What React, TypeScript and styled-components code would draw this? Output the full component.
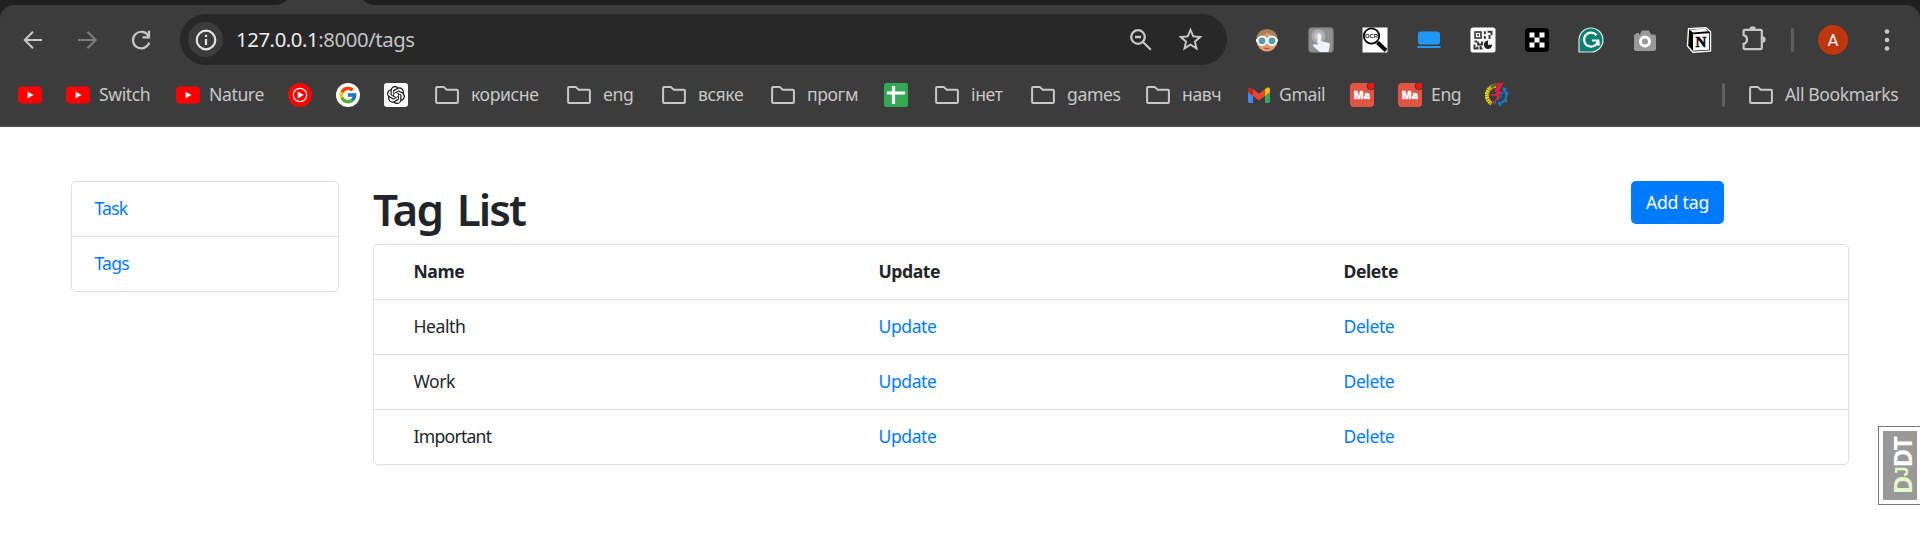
import React from "react";
import styled, { createGlobalStyle } from "styled-components";
import { FcGoogle } from "react-icons/fc";
import { SiOpenai } from "react-icons/si";
import { MdStarBorder } from "react-icons/md";

const Global = createGlobalStyle`
  * { box-sizing: border-box; }
  html, body { margin: 0; background: #fff; overflow: hidden; }
  body { font-family: "Noto Sans", "Open Sans", sans-serif; }
`;

const Page = styled.div`
  width: 1920px;
  height: 549px;
  position: relative;
  overflow: hidden;
`;
const TabStrip = styled.div`
  height: 5px;
  padding-left: 276px;
  svg { display: block; }
`;
const Chrome = styled.div`
  height: 127px;
  background: #1f2120;
`;
const Panel = styled.div`
  height: 122px;
  background: #3c3c3c;
  border-radius: 14px 14px 0 0;
  border-bottom: 2px solid #4b494b;
`;
const Toolbar = styled.div`
  height: 70px;
  display: flex;
  align-items: center;
  padding: 0 30px 1px 21px;
`;
const NavButton = styled.span<{ $gap: number }>`
  width: 24px;
  height: 24px;
  margin-right: ${(p) => p.$gap}px;
  svg { display: block; }
`;
const Omnibox = styled.div`
  width: 1047px;
  height: 51px;
  border-radius: 26px;
  background: #282828;
  display: flex;
  align-items: center;
  padding: 0 22px 0 8px;
`;
const SiteInfo = styled.span`
  width: 35px;
  height: 35px;
  border-radius: 50%;
  background: #3c3c3c;
  display: grid;
  place-items: center;
`;
const Url = styled.span`
  margin-left: 13px;
  padding-bottom: 1px;
  flex: 1;
  font-size: 20.3px;
  letter-spacing: -0.4px;
  color: #c3c3c3;
  white-space: nowrap;
  b { font-weight: 400; color: #ededed; }
`;
const OmniActions = styled.span`
  display: flex;
  align-items: center;
  gap: 23px;
  svg { display: block; }
`;
const Extensions = styled.div`
  margin-left: 27px;
  display: flex;
  gap: 28px;
  svg { display: block; }
`;
const Divider = styled.span`
  width: 3px;
  height: 24px;
  border-radius: 2px;
  background: #5f5f5f;
`;
const Avatar = styled.span`
  width: 30px;
  height: 30px;
  border-radius: 50%;
  background: #bf360c;
  color: #fff;
  font: 17px Roboto, sans-serif;
  display: grid;
  place-items: center;
  margin: 0 36px 0 24px;
`;
const Bookmarks = styled.div`
  height: 40px;
  display: flex;
  align-items: center;
  padding-left: 18px;
`;
const Bookmark = styled.span<{ $width: number; $gap?: number }>`
  width: ${(p) => p.$width}px;
  flex: none;
  display: flex;
  align-items: center;
  gap: ${(p) => p.$gap ?? 9}px;
  svg { display: block; flex: none; }
`;
const AllBookmarks = styled.span`
  width: 171px;
  margin-left: 24px;
  display: flex;
  align-items: center;
  gap: 12px;
  svg { display: block; }
`;
const Label = styled.span`
  font-size: 17.6px;
  line-height: 24px;
  padding-bottom: 2px;
  color: #c7c7c7;
  white-space: nowrap;
  letter-spacing: -0.4px;
`;
const Spacer = styled.span`flex: 1;`;

const Content = styled.main`
  display: flex;
  align-items: flex-start;
  padding: 54px 71px 0;
  gap: 34px;
`;
const ListGroup = styled.nav`
  width: 268px;
  border: 1px solid #dfdfdf;
  border-radius: 5px;
`;
const ListItem = styled.div`
  height: 54px;
  padding: 0 22.5px 2px;
  display: flex;
  align-items: center;
  & + & { height: 55px; border-top: 1px solid #dfdfdf; }
`;
const Link = styled.a<{ $track?: number }>`
  color: #007bff;
  font-size: 17.6px;
  letter-spacing: ${(p) => p.$track ?? -0.45}px;
`;
const Name = styled.span<{ $track?: number }>`
  letter-spacing: ${(p) => p.$track ?? -0.45}px;
`;
const Main = styled.section`width: 1476px;`;
const Heading = styled.div`
  display: flex;
  justify-content: space-between;
  height: 63px;
  padding-right: 125px;
`;
const Title = styled.h1`
  margin: 0;
  font-size: 44px;
  line-height: 57px;
  font-weight: 600;
  letter-spacing: -1.9px;
  word-spacing: 5px;
  color: #212529;
`;
const AddButton = styled.button`
  width: 93px;
  height: 43px;
  border: 0;
  border-radius: 5px;
  background: #007bff;
  color: #fff;
  font: 17.6px "Noto Sans", sans-serif;
  letter-spacing: -0.2px;
  padding: 0 0 1px;
  white-space: nowrap;
`;
const Table = styled.div`
  border: 1px solid #dfdfdf;
  border-radius: 5px;
`;
const Row = styled.div<{ $head?: boolean }>`
  height: 54px;
  display: grid;
  grid-template-columns: 465px 465px 1fr;
  align-items: center;
  padding: 0 0 2px 39.5px;
  font-size: 17.6px;
  color: #212529;
  font-weight: ${(p) => (p.$head ? 700 : 400)};
  & + & { height: 55px; border-top: 1px solid #dfdfdf; }
`;
const DebugHandle = styled.div`
  position: absolute;
  left: 1878px;
  top: 426px;
  width: 50px;
  height: 79px;
  border: 1px solid #777;
  background: #fff;
  padding: 4px;
`;
const DebugLabel = styled.div`
  height: 100%;
  background: #999;
  color: #fff;
  font: bold 25px/30px "Noto Sans", sans-serif;
  letter-spacing: -0.8px;
  writing-mode: vertical-rl;
  transform: rotate(180deg);
  padding: 6px 4px 0 0;
  white-space: nowrap;
  small { font: bold 18px "Liberation Sans", sans-serif; }
  i { font-style: normal; color: #e2fbc8; }
`;

const line = { fill: "none", stroke: "#c7c7c7", strokeWidth: 2 };

const Arrow = ({ flip, color }: { flip?: boolean; color: string }) => (
  <svg width="24" height="24" viewBox="0 0 24 24">
    <path d={flip ? "M3 12h17M12.5 3.8l8.2 8.2-8.2 8.2" : "M21 12H4M12 3.8L3.8 12l8.2 8.2"} fill="none" stroke={color} strokeWidth="2.1" />
  </svg>
);
const Reload = () => (
  <svg width="24" height="24" viewBox="0 0 24 24">
    <path d="M19.6 8.2A8.3 8.3 0 1 0 20.2 14.5" {...line} strokeWidth="2.2" />
    <path d="M20 2.8v6.5h-6.500" {...line} strokeWidth="2.2" />
  </svg>
);
const Info = () => (
  <svg width="22" height="22" viewBox="0 0 22 22">
    <circle cx="11" cy="11" r="9.3" fill="none" stroke="#e3e3e3" strokeWidth="2.2" />
    <path d="M11 10v6M11 5.8v2.300" stroke="#e3e3e3" strokeWidth="2.2" />
  </svg>
);
const ZoomOut = () => (
  <svg width="24" height="24" viewBox="0 0 24 24">
    <circle cx="9" cy="9" r="6.8" {...line} strokeWidth="2.3" />
    <path d="M6 9h6M13.500 13.500l8.300 8.300" {...line} strokeWidth="2.3" />
  </svg>
);
const Folder = () => (
  <svg width="24" height="24" viewBox="0 0 24 24">
    <path d="M1.100 18.900V4.900q0-1 1-1h6.600l3 2.900h10.200q1 0 1 1v11.100q0 1-1 1H2.100q-1 0-1-1z" {...line} strokeWidth="2" />
  </svg>
);
const YouTube = () => (
  <svg width="24" height="24" viewBox="0 0 24 24">
    <rect y="3.500" width="24" height="17" rx="3.800" fill="#f00" />
    <path d="M9.600 8.800l6 3.200-6 3.200z" fill="#fff" />
  </svg>
);
const Music = () => (
  <svg width="24" height="24" viewBox="0 0 24 24">
    <circle cx="12" cy="12" r="12" fill="#f00" />
    <circle cx="12" cy="12" r="6.700" fill="none" stroke="#fff" strokeWidth="1.200" />
    <path d="M9.800 8.500l6 3.500-6 3.500z" fill="#fff" />
  </svg>
);
const RoundIcon = styled.span<{ $radius: string }>`
  width: 24px;
  height: 24px;
  border-radius: ${(p) => p.$radius};
  background: #fff;
  color: #111;
  display: grid;
  place-items: center;
`;
const Sheet = () => (
  <svg width="24" height="24" viewBox="0 0 24 24">
    <rect width="24" height="24" rx="2.500" fill="#34a853" />
    <path d="M9.500 3v18M3 10h18" stroke="#fff" strokeWidth="3.200" />
  </svg>
);
const Gmail = () => (
  <svg width="22" height="24" viewBox="0 0 22 24">
    <path d="M0 8l5 4v8H1.500Q0 20 0 18.500z" fill="#4285f4" />
    <path d="M22 8l-5 4v8h3.500q1.500 0 1.500-1.500z" fill="#34a853" />
    <path d="M17 6.200l1.800-1.400Q22 3.500 22 6.500V9l-5 4z" fill="#fbbc04" />
    <path d="M5 6.200L3.200 4.800Q0 3.500 0 6.500V9l5 4z" fill="#c5221f" />
    <path d="M5 6.200l6 4.600 6-4.600V13l-6 4.500L5 13z" fill="#ea4335" />
  </svg>
);
const Ma = () => (
  <svg width="24" height="24" viewBox="0 0 24 24">
    <rect width="24" height="24" rx="4" fill="#e25443" />
    <text x="12" y="16" textAnchor="middle" fontFamily="Open Sans" fontWeight="800" fontSize="10.3" fill="#fff" stroke="#fff" strokeWidth=".3">Ma</text>
    <circle cx="21" cy="3" r="4.300" fill="#3c3c3c" />
    <circle cx="21" cy="3" r="3.200" fill="#fb1111" />
  </svg>
);
const Emblem = () => (
  <svg width="24" height="24" viewBox="0 0 24 24">
    <path d="M11 2.800A9.500 9.500 0 0 0 6.500 20.500" fill="none" stroke="#f5d800" strokeWidth="4" strokeDasharray="1.800 .5" />
    <path d="M6 4.500Q9 1.500 14 1.600" fill="none" stroke="#695c24" strokeWidth="2.500" />
    <path d="M18.500 6.800A7.500 7.500 0 0 1 13 20" fill="none" stroke="#1479c4" strokeWidth="2.300" />
    <path d="M18 5.300l3 1.700M20.500 10.500h3M20 17l2 1.500M15 20v3M9.500 18v2.500" stroke="#1479c4" strokeWidth="3" />
    <path d="M18.500 0h-5L9 8.500h3L10.500 11H5.500v1.800h7L7 23l9-10.500h-2.500L15 10.500h2V8.500h-3z" fill="#e51b43" />
    <path d="M15 10h4M16 10v5M13.500 14v3" stroke="#1479c4" strokeWidth="1.200" />
  </svg>
);

const Glasses = () => (
  <svg width="26" height="26" viewBox="0 0 26 26">
    <ellipse cx="13" cy="13.500" rx="10.500" ry="11" fill="#e19a6d" />
    <path d="M2.500 12C2.500-1 23.500-1 23.500 12l-5-2.500L14 5.500 8 9z" fill="#a58257" />
    <path d="M2 13.500h22" stroke="#eef7fa" strokeWidth="2.500" />
    <circle cx="8" cy="13.800" r="4.400" fill="#579ca9" stroke="#f4fafb" strokeWidth="2" />
    <circle cx="18" cy="13.800" r="4.400" fill="#579ca9" stroke="#f4fafb" strokeWidth="2" />
    <path d="M10.500 21q2.500 1.300 5 0" fill="none" stroke="#b65c49" strokeWidth="1.200" />
  </svg>
);
const Hand = () => (
  <svg width="26" height="26" viewBox="0 0 26 26">
    <rect x=".8" y=".8" width="24.400" height="24.400" rx="2.500" fill="#8f8f8f" stroke="#777" />
    <circle cx="10.500" cy="9" r="7" fill="#adadad" />
    <circle cx="10.500" cy="9" r="4" fill="#c6c6c6" />
    <path d="M9.500 8q1.700-2.500 3.400 0v6l8 2q1.500.5 1 2.500l-1.500 6.500h-8.500L5.500 19.500q-1-2.500 1-2.500l3 1z" fill="#edf2fb" />
  </svg>
);
const Ocr = () => (
  <svg width="26" height="26" viewBox="0 0 26 26">
    <rect x=".5" y=".5" width="25" height="25" fill="#fff" />
    <path d="M15.500 15.500l8.500 8" stroke="#000" strokeWidth="4" />
    <circle cx="9.500" cy="9" r="7.700" fill="#fff" stroke="#000" strokeWidth="1.800" />
    <text x="9.500" y="11.200" textAnchor="middle" fontFamily="Liberation Sans" fontWeight="700" fontSize="5.800" fill="#222">OCR</text>
  </svg>
);
const Laptop = () => (
  <svg width="26" height="26" viewBox="0 0 26 26">
    <rect x="2" y="4.500" width="22" height="13" rx="2.500" fill="#2196f3" />
    <path d="M1.500 20h23" stroke="#2196f3" strokeWidth="2" />
  </svg>
);
const Qr = () => (
  <svg width="26" height="26" viewBox="0 0 26 26">
    <rect x=".5" y=".5" width="25" height="25" rx="2.500" fill="#fff" />
    <rect x="5" y="5" width="6" height="6" fill="none" stroke="#333" strokeWidth="1.600" />
    <path d="M7.300 8h1.600M14.800 4.200v3M14.800 9v3M17.500 4.800h4v3.500M19.500 8v4M4.500 14.500h2.500M8 14.500v3h4v-3M4.500 17.500v4h3v-2M10.500 19v2.500h2" fill="none" stroke="#333" strokeWidth="1.900" />
    <path d="M18 13.500a4.200 4.200 0 1 0 4.200 4.200H18z" fill="#222" />
  </svg>
);
const Checker = () => (
  <svg width="26" height="26" viewBox="0 0 26 26">
    <rect x="1" y="1" width="24" height="24" rx="4" fill="#000" />
    <path d="M5.500 5.500h5v5h-5zM15.500 5.500h5v5h-5zM10.500 10.500h5v5h-5zM5.500 15.500h5v5h-5zM15.500 15.500h5v5h-5z" fill="#fff" />
  </svg>
);
const Grammar = () => (
  <svg width="26" height="26" viewBox="0 0 26 26">
    <path d="M1 25V13A12 12 0 1 1 13 25z" fill="#0b8070" stroke="#d9e8e5" strokeWidth="1.200" />
    <path d="M18.500 8.200A7 7 0 1 0 20 13.500h-6M17.500 17l3 .5v-4" fill="none" stroke="#fff" strokeWidth="2.200" />
  </svg>
);
const Camera = () => (
  <svg width="26" height="26" viewBox="0 0 26 26">
    <path d="M2 7.500h2V6h3v1.500h1L10 3.500h7L19 7.500h3q2 0 2 2V22q0 2-2 2H4q-2 0-2-2z" fill="#999" />
    <circle cx="13" cy="14.500" r="4.500" fill="#999" stroke="#fff" strokeWidth="3" />
  </svg>
);
const Notion = () => (
  <svg width="26" height="26" viewBox="0 0 26 26">
    <path d="M2.500 1.800L20 .8l4.500 4V24L7 25.200 1.500 19z" fill="#000" stroke="#fff" strokeWidth="1.400" strokeLinejoin="round" />
    <path d="M3.500 2.800l15.800-1 3 2.500L7 5.400z" fill="#fff" />
    <path d="M7 7.200L23 6.200v16.500L7 23.800z" fill="#fff" />
    <text x="15" y="20" textAnchor="middle" fontFamily="Liberation Serif" fontWeight="700" fontSize="15" fill="#000" stroke="#000" strokeWidth=".5">N</text>
  </svg>
);
const Puzzle = () => (
  <svg width="26" height="26" viewBox="0 0 26 26" overflow="visible">
    <path d="M4.400 2.900h16.400q1 0 1 1v17.200q0 1-1 1H4.600q-1 0-1-1v-4.300c4.500-.9 4.500-7.700 0-8.600V3.900q0-1 .8-1z" {...line} strokeWidth="2.200" />
    <path d="M9.400 2.500a3.200 3.200 0 0 1 6.400 0zM22.300 9.300a3.300 3.300 0 0 1 0 6.600z" fill="#c7c7c7" />
  </svg>
);
const Menu = () => (
  <svg width="6" height="26" viewBox="0 0 6 26">
    <g fill="#c7c7c7"><circle cx="3" cy="4.500" r="2.300" /><circle cx="3" cy="13" r="2.300" /><circle cx="3" cy="21.500" r="2.300" /></g>
  </svg>
);

const google = <RoundIcon $radius="50%"><FcGoogle size={20} /></RoundIcon>;
const openai = <RoundIcon $radius="3px"><SiOpenai size={18} /></RoundIcon>;

const bookmarks: { icon: React.ReactNode; width: number; label?: string; gap?: number }[] = [
  { icon: <YouTube />, width: 48 },
  { icon: <YouTube />, width: 110, label: "Switch" },
  { icon: <YouTube />, width: 112, label: "Nature" },
  { icon: <Music />, width: 48 },
  { icon: google, width: 48 },
  { icon: openai, width: 51 },
  { icon: <Folder />, width: 132, label: "корисне", gap: 12 },
  { icon: <Folder />, width: 95, label: "eng", gap: 12 },
  { icon: <Folder />, width: 109, label: "всяке", gap: 12 },
  { icon: <Folder />, width: 113, label: "прогм", gap: 12 },
  { icon: <Sheet />, width: 51 },
  { icon: <Folder />, width: 96, label: "інет", gap: 12 },
  { icon: <Folder />, width: 115, label: "games", gap: 12 },
  { icon: <Folder />, width: 102, label: "навч", gap: 12 },
  { icon: <Gmail />, width: 102, label: "Gmail" },
  { icon: <Ma />, width: 48 },
  { icon: <Ma />, width: 87, label: "Eng" },
  { icon: <Emblem />, width: 24 },
];

const tags = [
  { name: "Health" },
  { name: "Work" },
  { name: "Important", track: -0.75 },
];

export default function App() {
  return (
    <Page>
      <Global />
      <Chrome>
        <TabStrip>
          <svg width="100" height="5" viewBox="0 0 100 5"><path d="M0 5Q7 4.500 11 0H87q4 4.500 11 5z" fill="#3c3c3c" /></svg>
        </TabStrip>
        <Panel>
          <Toolbar>
            <NavButton $gap={30}><Arrow color="#c7c7c7" /></NavButton>
            <NavButton $gap={30}><Arrow flip color="#7c7c7c" /></NavButton>
            <NavButton $gap={27}><Reload /></NavButton>
            <Omnibox>
              <SiteInfo><Info /></SiteInfo>
              <Url><b>127.0.0.1</b>:8000/tags</Url>
              <OmniActions><ZoomOut /><MdStarBorder size={29} color="#c7c7c7" /></OmniActions>
            </Omnibox>
            <Extensions>
              <Glasses /><Hand /><Ocr /><Laptop /><Qr /><Checker /><Grammar /><Camera /><Notion /><Puzzle />
            </Extensions>
            <Spacer />
            <Divider />
            <Avatar>A</Avatar>
            <Menu />
          </Toolbar>
          <Bookmarks>
            {bookmarks.map((b, i) => (
              <Bookmark key={i} $width={b.width} $gap={b.gap}>
                {b.icon}
                {b.label && <Label>{b.label}</Label>}
              </Bookmark>
            ))}
            <Spacer />
            <Divider />
            <AllBookmarks>
              <Folder />
              <Label>All Bookmarks</Label>
            </AllBookmarks>
          </Bookmarks>
        </Panel>
      </Chrome>
      <Content>
        <ListGroup>
          <ListItem><Link $track={-0.8}>Task</Link></ListItem>
          <ListItem><Link $track={-0.8}>Tags</Link></ListItem>
        </ListGroup>
        <Main>
          <Heading>
            <Title>Tag List</Title>
            <AddButton>Add tag</AddButton>
          </Heading>
          <Table>
            <Row $head><Name>Name</Name><Name>Update</Name><Name>Delete</Name></Row>
            {tags.map((tag) => (
              <Row key={tag.name}><Name $track={tag.track}>{tag.name}</Name><Link>Update</Link><Link>Delete</Link></Row>
            ))}
          </Table>
        </Main>
      </Content>
      <DebugHandle>
        <DebugLabel><i>D<small>J</small></i>DT</DebugLabel>
      </DebugHandle>
    </Page>
  );
}
